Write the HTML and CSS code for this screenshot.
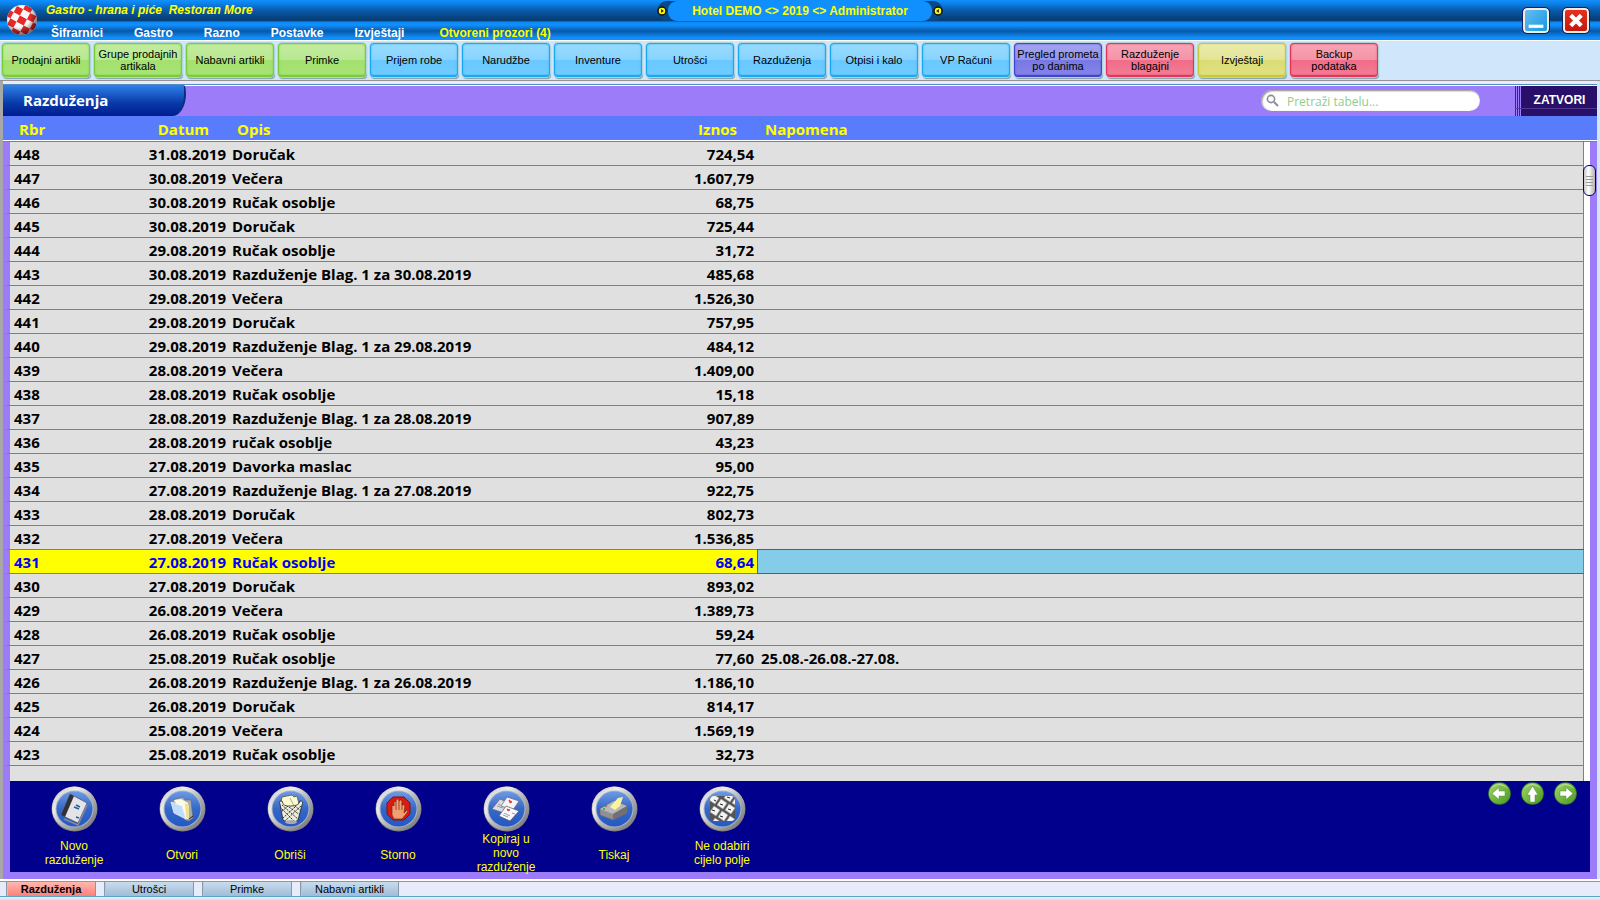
FILE: index.html
```
<!DOCTYPE html>
<html lang="hr">
<head>
<meta charset="utf-8">
<title>Gastro - hrana i piće</title>
<link rel="stylesheet" href="styles.css">
</head>
<body>
<svg class="defs" aria-hidden="true">
  <defs>
    <linearGradient id="rim" x1="0" y1="0" x2="1" y2="1"><stop offset="0" stop-color="#c4c4c4"/><stop offset=".3" stop-color="#ececec"/><stop offset=".55" stop-color="#b4b4b4"/><stop offset="1" stop-color="#6c6c6c"/></linearGradient>
    <linearGradient id="disc" x1="0" y1="0" x2="0" y2="1"><stop offset="0" stop-color="#6c9ae4"/><stop offset=".5" stop-color="#3468c8"/><stop offset="1" stop-color="#2458c4"/></linearGradient>
    <linearGradient id="green" x1="0" y1="0" x2="1" y2="1"><stop offset="0" stop-color="#a4d470"/><stop offset=".5" stop-color="#74b840"/><stop offset="1" stop-color="#4c9424"/></linearGradient>
    <radialGradient id="shade" cx=".4" cy=".35" r=".65"><stop offset=".6" stop-color="#000" stop-opacity="0"/><stop offset="1" stop-color="#200" stop-opacity=".6"/></radialGradient>
    <g id="badge"><ellipse cx="23.500" cy="23" rx="23" ry="22.500" fill="#7c7c7c"/><ellipse cx="23.500" cy="22.500" rx="22.500" ry="22" fill="url(#rim)"/><ellipse cx="23.500" cy="23" rx="19" ry="18.500" fill="#a8b4c8"/><ellipse cx="23.500" cy="23" rx="18" ry="17.500" fill="url(#disc)"/></g>
    <g id="orb"><circle cx="11.500" cy="11.500" r="11.300" fill="#3f8420"/><circle cx="11.500" cy="11.500" r="10.600" fill="url(#green)"/><path d="M3 7A10 10 0 0 1 20 7Q11-1 3 7" fill="#e4f4d0" opacity=".75"/></g>
  </defs>
</svg>
<div class="app">
  <header class="titlebar">
    <svg class="ball" viewBox="0 0 32 32" aria-hidden="true">
      <clipPath id="ballclip"><circle cx="16" cy="16" r="15"/></clipPath>
      <g clip-path="url(#ballclip)"><path fill="#f8f8f8" d="M0 0h32v32H0z"/><path transform="rotate(28 16 16)" fill="#e82828" d="M0 1h5v5H0zM12 1h8v5h-8zM27 1h5v5h-5zM5 6h7v7H5zM20 6h7v7h-7zM0 13h5v7H0zM12 13h8v7h-8zM27 13h5v7h-5zM5 20h7v7H5zM20 20h7v7h-7zM12 27h8v5h-8z"/></g>
      <circle cx="16" cy="16" r="15" fill="url(#shade)"/>
    </svg>
    <div class="titles">
      <h1>Gastro - hrana i piće&nbsp; Restoran More</h1>
      <nav class="menu">
        <a href="#">Šifrarnici</a><a href="#">Gastro</a><a href="#">Razno</a><a href="#">Postavke</a><a href="#">Izvještaji</a><a href="#" class="open">Otvoreni prozori (4)</a>
      </nav>
    </div>
    <div class="session">
      <svg viewBox="0 0 10 10" aria-hidden="true"><circle cx="5" cy="5" r="4" fill="#ff0" stroke="#111" stroke-width="1.500"/><path d="M4 3l3 2-3 2z" fill="#333"/></svg>
      <span>Hotel DEMO &lt;&gt; 2019 &lt;&gt; Administrator</span>
      <svg viewBox="0 0 10 10" aria-hidden="true"><circle cx="5" cy="5" r="4" fill="#ff0" stroke="#111" stroke-width="1.500"/><path d="M6 3L3 5l3 2z" fill="#333"/></svg>
    </div>
    <div class="winbtns">
      <button class="min" aria-label="Minimiziraj"><svg viewBox="0 0 20 20"><path d="M3 14h14v3H3z" fill="#fff"/></svg></button>
      <button class="cls" aria-label="Zatvori program"><svg viewBox="0 0 20 20"><path d="M5 5l10 10M15 5L5 15" stroke="#fff" stroke-width="4"/></svg></button>
    </div>
  </header>
  <nav class="toolbar">
    <button class="g">Prodajni artikli</button><button class="g">Grupe prodajnih artikala</button><button class="g">Nabavni artikli</button><button class="g">Primke</button><button class="b">Prijem robe</button><button class="b">Narudžbe</button><button class="b">Inventure</button><button class="b">Utrošci</button><button class="b">Razduženja</button><button class="b">Otpisi i kalo</button><button class="b">VP Računi</button><button class="v">Pregled prometa po danima</button><button class="r">Razduženje blagajni</button><button class="y">Izvještaji</button><button class="r">Backup<br>podataka</button>
  </nav>
  <main class="window">
    <div class="caption">
      <h2>Razduženja</h2>
      <label class="search">
        <svg viewBox="0 0 14 14" aria-hidden="true"><circle cx="5" cy="5" r="3.600" fill="none" stroke="#8c8c98" stroke-width="1.600"/><path d="M8 8l4 4" stroke="#8c8c98" stroke-width="2"/></svg>
        <input type="text" placeholder="Pretraži tabelu..." aria-label="Pretraži tabelu">
      </label>
      <button class="zatvori">ZATVORI</button>
    </div>
    <div class="grid">
      <table>
        <colgroup><col class="c1"><col class="c2"><col class="c3"><col class="c4"><col></colgroup>
        <thead><tr><th>Rbr</th><th>Datum</th><th>Opis</th><th>Iznos</th><th>Napomena</th></tr></thead>
        <tbody>
          <tr><td>448</td><td>31.08.2019</td><td>Doručak</td><td>724,54</td><td></td></tr>
          <tr><td>447</td><td>30.08.2019</td><td>Večera</td><td>1.607,79</td><td></td></tr>
          <tr><td>446</td><td>30.08.2019</td><td>Ručak osoblje</td><td>68,75</td><td></td></tr>
          <tr><td>445</td><td>30.08.2019</td><td>Doručak</td><td>725,44</td><td></td></tr>
          <tr><td>444</td><td>29.08.2019</td><td>Ručak osoblje</td><td>31,72</td><td></td></tr>
          <tr><td>443</td><td>30.08.2019</td><td>Razduženje Blag. 1 za 30.08.2019</td><td>485,68</td><td></td></tr>
          <tr><td>442</td><td>29.08.2019</td><td>Večera</td><td>1.526,30</td><td></td></tr>
          <tr><td>441</td><td>29.08.2019</td><td>Doručak</td><td>757,95</td><td></td></tr>
          <tr><td>440</td><td>29.08.2019</td><td>Razduženje Blag. 1 za 29.08.2019</td><td>484,12</td><td></td></tr>
          <tr><td>439</td><td>28.08.2019</td><td>Večera</td><td>1.409,00</td><td></td></tr>
          <tr><td>438</td><td>28.08.2019</td><td>Ručak osoblje</td><td>15,18</td><td></td></tr>
          <tr><td>437</td><td>28.08.2019</td><td>Razduženje Blag. 1 za 28.08.2019</td><td>907,89</td><td></td></tr>
          <tr><td>436</td><td>28.08.2019</td><td>ručak osoblje</td><td>43,23</td><td></td></tr>
          <tr><td>435</td><td>27.08.2019</td><td>Davorka maslac</td><td>95,00</td><td></td></tr>
          <tr><td>434</td><td>27.08.2019</td><td>Razduženje Blag. 1 za 27.08.2019</td><td>922,75</td><td></td></tr>
          <tr><td>433</td><td>28.08.2019</td><td>Doručak</td><td>802,73</td><td></td></tr>
          <tr><td>432</td><td>27.08.2019</td><td>Večera</td><td>1.536,85</td><td></td></tr>
          <tr class="sel"><td>431</td><td>27.08.2019</td><td>Ručak osoblje</td><td>68,64</td><td></td></tr>
          <tr><td>430</td><td>27.08.2019</td><td>Doručak</td><td>893,02</td><td></td></tr>
          <tr><td>429</td><td>26.08.2019</td><td>Večera</td><td>1.389,73</td><td></td></tr>
          <tr><td>428</td><td>26.08.2019</td><td>Ručak osoblje</td><td>59,24</td><td></td></tr>
          <tr><td>427</td><td>25.08.2019</td><td>Ručak osoblje</td><td>77,60</td><td>25.08.-26.08.-27.08.</td></tr>
          <tr><td>426</td><td>26.08.2019</td><td>Razduženje Blag. 1 za 26.08.2019</td><td>1.186,10</td><td></td></tr>
          <tr><td>425</td><td>26.08.2019</td><td>Doručak</td><td>814,17</td><td></td></tr>
          <tr><td>424</td><td>25.08.2019</td><td>Večera</td><td>1.569,19</td><td></td></tr>
          <tr><td>423</td><td>25.08.2019</td><td>Ručak osoblje</td><td>32,73</td><td></td></tr>
        </tbody>
      </table>
      <div class="rest"></div>
      <div class="thumb"><i></i><i></i><i></i><i></i></div>
    </div>
    <div class="actions">
      <button><svg viewBox="0 0 47 46"><use href="#badge"/><path d="M19 8l17 9-9 20-17-8z" fill="#e4e4e8" stroke="#445" stroke-width=".6"/><path d="M19 8l4 2-9 21-4-2z" fill="#303038"/><path d="M13 33l14 6 9-20" fill="none" stroke="#889" stroke-width="1.500"/><path d="M25 19l4 2m-6 0l5 2m-3 8l3 1" stroke="#246098" stroke-width="1.600"/></svg><span>Novo razduženje</span></button>
      <button class="one"><svg viewBox="0 0 47 46"><use href="#badge"/><path d="M13 15l4-2 7-2 2 3 6 0 1 10 1 8-4 3-4-1z" fill="#a4acb4" stroke="#667" stroke-width=".6"/><path d="M15 14l7-1 7 4 0 16-4-1z" fill="#fffbe0"/><path d="M26 17l4 2v14l-3-2z" fill="#f0e08c"/><path d="M12 16l11 4 4 13-12-6z" fill="#c0dcfc" stroke="#e8f0fc" stroke-width=".8"/><path d="M30 33l4-3" stroke="#222"/></svg><span>Otvori</span></button>
      <button class="one"><svg viewBox="0 0 47 46"><use href="#badge"/><path d="M14 16l1-5 10-2 2 2 3-1 2 8-6 5H15z" fill="#fffbd0" stroke="#554" stroke-width=".8"/><path d="M23 12l5 10" stroke="#aa9"/><path d="M13 18q-2-3 2-3 1 6 9 5 8 0 9-5 4 0 2 4l-4 15q-7 6-15 0z" fill="#ececdc" stroke="#222" stroke-width=".8"/><path d="M13 21l14 14M15 19l17 15M22 21l11 8M28 20l6 5M34 20L18 35M28 21L16 32M21 20l-7 6" stroke="#333" stroke-width="1" stroke-dasharray="2 1"/><ellipse cx="24" cy="36" rx="6" ry="2" fill="#aaa"/></svg><span>Obriši</span></button>
      <button class="one"><svg viewBox="0 0 47 46"><use href="#badge"/><path d="M18 11h11l6 6v11l-6 6H18l-6-6V17z" fill="#d81c14" stroke="#8c0c0c"/><path d="M17 20q1-2 2 0v-4q1-2 2 0v-2q1-2 3 0v1q2-2 3 0v4q2-1 3 1l-1 7 3-3q2 0 0 3l-5 6h-8l-2-4z" fill="#f0a070" stroke="#802010" stroke-width=".7"/><path d="M21 16v8M24 15v9M27 17v7" stroke="#802010" stroke-width=".7"/></svg><span>Storno</span></button>
      <button><svg viewBox="0 0 47 46"><use href="#badge"/><path d="M17 13l11 5-7 9-12-4z" fill="#dcdce0" stroke="#667" stroke-width=".7"/><path d="M24 11l12 4-6 9-12-4z" fill="#f4f4f8" stroke="#667" stroke-width=".7"/><path d="M23 20l13 5-9 10-11-5z" fill="#f8f8fc" stroke="#556" stroke-width=".7"/><path d="M26 14l3 2-2 1zM24 23l3 1-2 1z" fill="#e84040" stroke="#e84040"/><path d="M14 20l6 2M15 18l4 2M21 27l6 3M20 29l5 2M29 27l3 1" stroke="#99a"/></svg><span>Kopiraj u novo razduženje</span></button>
      <button class="one"><svg viewBox="0 0 47 46"><use href="#badge"/><path d="M9 23l14-8 13 5v7L22 34 9 29z" fill="#909094" stroke="#667" stroke-width=".7"/><path d="M9 23l14-8 13 5-14 8z" fill="#b8b8bc"/><path d="M22 28v6l14-7v-7z" fill="#707074"/><path d="M19 21l8-9 5-1-3 9-5 4z" fill="#f8f4a0"/><path d="M12 23h2" stroke="#30c040" stroke-width="2"/><path d="M14 20h2" stroke="#d04030" stroke-width="1.500"/></svg><span>Tiskaj</span></button>
      <button><svg viewBox="0 0 47 46"><use href="#badge"/><clipPath id="keys"><rect x="11" y="10" width="25" height="25" rx="4"/></clipPath><g clip-path="url(#keys)"><path fill="#555" d="M11 10h25v25H11z"/><g fill="#f4f4f4" stroke="#999" stroke-width=".6"><path id="key" d="M22 13l6 4-4 6-6-4z"/><use href="#key" x="8" y="5"/><use href="#key" x="-8" y="-5"/><use href="#key" x="-7" y="7"/><use href="#key" x="1" y="12"/><use href="#key" x="7" y="-7"/><use href="#key" x="9" y="17"/><use href="#key" x="15" y="-2"/><use href="#key" x="-6" y="19"/></g><path d="M21 18l3 1m5 4l3 1m-19 0l3 1m5 5l3 1m4-20l3 1m-16 2l2 1" stroke="#222"/></g></svg><span>Ne odabiri cijelo polje</span></button>
      <div class="nav">
        <button aria-label="Prethodni"><svg viewBox="0 0 23 23"><use href="#orb"/><path d="M4 11.500l7-6v3.500h6v5h-6v3.500z" fill="#fff" stroke="#4c8c30" stroke-width=".5"/></svg></button>
        <button aria-label="Gore"><svg viewBox="0 0 23 23"><use href="#orb"/><path d="M11.500 4l5.500 9h-3v7H9v-7H6z" fill="#fff" stroke="#4c8c30" stroke-width=".5"/></svg></button>
        <button aria-label="Sljedeći"><svg viewBox="0 0 23 23"><use href="#orb"/><path d="M19 11.500l-7-6v3.500H6v5h6v3.500z" fill="#fff" stroke="#4c8c30" stroke-width=".5"/></svg></button>
      </div>
    </div>
  </main>
  <footer class="tabs">
    <button class="active">Razduženja</button><button>Utrošci</button><button>Primke</button><button>Nabavni artikli</button>
  </footer>
</div>
</body>
</html>
```

FILE: styles.css
```
* { box-sizing: border-box; }
body { margin: 0; font-family: "Liberation Sans", Arial, sans-serif; font-size: 12px; background: #d0e6fa; }
button { font: inherit; border: 0; padding: 0; margin: 0; background: none; cursor: pointer; }
h1, h2 { margin: 0; }
.defs { position: absolute; width: 0; height: 0; }
.app { min-height: 100vh; display: flex; flex-direction: column; }

.titlebar { position: relative; display: flex; height: 41px; padding-left: 6px; border-bottom: 1px solid #fff;
  background: linear-gradient(#1090ff 0, #0c84ec 3px, #0858a8 11px, #083c70 20px, #084888 21px, #0c88f4 22px, #1090ff 25px, #0858a8 31px, #1090ff 38px, #1090ff 40px); }
.ball { width: 32px; height: 32px; margin-top: 4px; }
.titles { padding-left: 8px; }
h1 { font-size: 12px; line-height: 20px; height: 24px; font-style: italic; color: #ff0; white-space: nowrap; }
.menu { display: flex; gap: 31px; padding-left: 5px; line-height: 18px; font-weight: bold; white-space: nowrap; }
.menu a { color: #fff; text-decoration: none; }
.menu .open { color: #ff0; padding-left: 4px; }
.session { position: absolute; top: 1px; left: 50%; margin-left: -143px; width: 286px; height: 20px; display: flex; align-items: center; justify-content: space-between; background: #084888; border-radius: 10px; color: #ff0; font-weight: bold; }
.session span { flex: 1; margin: 0 1px; line-height: 20px; text-align: center; background: #1090ff; border-radius: 9px; }
.session svg { width: 10px; height: 10px; }
.winbtns { margin-left: auto; padding: 8px 11px 0 0; display: flex; gap: 14px; }
.winbtns button { width: 26px; height: 25px; border: 2px solid #f4ecdc; border-radius: 4px; outline: 1px solid #0c1c70; }
.winbtns svg { display: block; width: 22px; height: 21px; }
.min { background: linear-gradient(135deg, #68bcf4, #1498e0); }
.cls { background: linear-gradient(#e83020, #c01810); }

.toolbar { display: flex; gap: 4px; height: 40px; padding: 2px 2px 2px; border-bottom: 1px solid #989098; background: #d0e6fa; }
.toolbar button { width: 88px; height: 34px; border: 1px solid; border-bottom-width: 2px; border-radius: 4px; font-size: 11px; line-height: 12px; color: #000; box-shadow: 0 0 0 1px #b0d4e0, 1px 2px 1px #80a0a8, inset 0 0 2px var(--s); }
.toolbar .g { background: linear-gradient(#c4eca0, #b8e890 50%, #a4e070 52%, #a8e474); border-color: #78cc38; --s: #78cc38; }
.toolbar .b { background: linear-gradient(#98dcff, #88d4ff 50%, #68c8ff 52%, #70ccff); border-color: #18a8f4; --s: #30b4f8; }
.toolbar .v { background: linear-gradient(#a4a4f0, #9494ec 50%, #7878e4 52%, #8484e8); border-color: #4444cc; --s: #5050d0; }
.toolbar .r { background: linear-gradient(#f8a4b4, #f494a8 50%, #f06c88 52%, #f47c94); border-color: #e43458; --s: #e84868; }
.toolbar .y { background: linear-gradient(#ececac, #e4e498 50%, #dcdc74 52%, #e0e080); border-color: #c8c838; --s: #d0d050; }

.window { flex: 1; margin-right: 3px; border-left: 3px solid #a8a8a8; padding: 3px 0 7px; display: flex; flex-direction: column; background: linear-gradient(#e8ecfa 3px, #9c7cf8 3px); }
.caption { display: flex; align-items: stretch; height: 32px; border-top: 1px solid #5090c0; box-shadow: inset 0 1px #fff; }
.caption h2 { width: 183px; padding-left: 20px; font: bold 15px/31px "Open Sans", "Noto Sans", sans-serif; color: #fff; background: linear-gradient(#3080e8, #0838a8 60%, #001c90); border-radius: 0 3px 18px 0 / 0 12px 30px 0; border-right: 2px solid #083078; }
.search { display: flex; align-items: center; gap: 7px; margin: 5px 35px 5px auto; padding-left: 5px; width: 219px; height: 21px; border-radius: 11px; background: #fff; box-shadow: inset 1px 1px 2px #888; }
.search svg { width: 14px; height: 14px; }
.search input { width: 170px; min-width: 0; padding: 2px 0 0; border: 0; outline: 0; background: none; font: 12px/18px "Open Sans", "Noto Sans", sans-serif; }
.search input::placeholder { color: #90cc90; opacity: 1; }
.zatvori { width: 82px; margin-top: 1px; padding: 0 0 3px 7px; color: #fff; font-weight: bold; background: linear-gradient(transparent 22px, #503890 22px, #503890 23px, transparent 23px), linear-gradient(90deg, #402080 1px, #9c7cf8 1px, #9c7cf8 2px, #402080 2px, #402080 3px, #9c7cf8 3px, #9c7cf8 4px, #402080 4px, #402080 5px, #9c7cf8 5px, #9c7cf8 6px, #281068 6px); }

.grid { position: relative; display: flex; flex-direction: column; flex: 1; padding-right: 13px; background: linear-gradient(#587cfc 24px, #fff 24px, #fff 25px, #587cfc 25px, #587cfc 26px, transparent 26px), linear-gradient(90deg, transparent calc(100% - 13px), #fff calc(100% - 13px), #fff calc(100% - 7px), #9c7cf8 calc(100% - 7px)); }
table { width: 100%; border-collapse: separate; border-spacing: 0; table-layout: fixed; font: bold 15px/22px "Open Sans", "Noto Sans", sans-serif; }
.c1 { width: 96px; }
.c2 { width: 130px; }
.c3 { width: 424px; }
.c4 { width: 104px; }
th { height: 26px; padding: 0 8px; text-align: left; color: #ff0; background: #587cfc; border-bottom: 1px solid #587cfc; box-shadow: inset 0 -1px #fff; }
th:first-child { padding-left: 16px; }
th:nth-child(2), th:nth-child(4) { text-align: right; padding-right: 20px; }
tbody td { height: 24px; padding: 0 3px; white-space: nowrap; background: #e0e0e0; border-bottom: 1px solid #587cfc; color: #000; }
tbody td:first-child { padding-left: 4px; border-left: 7px solid #9c7cf8; }
td:nth-child(2), td:nth-child(4) { text-align: right; }
tbody td:last-child { padding-left: 4px; border-right: 1px solid #587cfc; }
tbody .sel td { background: #ff0; color: #00f; }
tbody .sel td:last-child { background: #84cce8; border-bottom-color: #506070; box-shadow: inset 1px 0 #506070, 0 -1px #506070; }
.rest { flex: 1; margin-left: 7px; background: #e0e0e0; border-right: 1px solid #587cfc; }
.thumb { position: absolute; top: 49px; right: 1px; width: 13px; height: 31px; padding: 10px 2px 0; display: flex; flex-direction: column; gap: 2px; border: 1px solid #000070; border-radius: 6px; background: linear-gradient(90deg, #c8c8c8, #fff 40%, #b0b0b0); }
.thumb i { height: 1px; background: #999; }

.actions { display: flex; height: 91px; margin: 0 7px; padding-left: 10px; background: #00008c; }
.actions > button { width: 108px; height: 91px; padding-top: 5px; display: flex; flex-direction: column; align-items: center; color: #ff0; line-height: 14px; }
.actions > button svg { flex: none; width: 47px; height: 46px; }
.actions span { width: 72px; height: 42px; flex: none; display: flex; align-items: center; justify-content: center; text-align: center; }
.actions .one span { padding-top: 4px; }
.nav { margin-left: auto; padding: 1px 13px 0 0; display: flex; gap: 10px; align-items: flex-start; }
.nav svg { display: block; width: 23px; height: 23px; }

.tabs { display: flex; gap: 8px; height: 21px; padding: 3px 6px 4px; background: linear-gradient(#fff 2px, #909890 2px, #909890 3px, #e8ecfa 3px, #e8ecfa 17px, #60a0c0 17px, #60a0c0 18px, #e8f4fc 18px, #d0e6fa 20px); }
.tabs button { width: 90px; font-size: 11px; line-height: 14px; border: solid #8898a8; border-width: 0 1px; background: linear-gradient(#c8dcec, #a0bcd8); box-shadow: inset 1px 0 #b8c8d8; }
.tabs button:last-child { width: 99px; }
.tabs .active { font-weight: bold; background: linear-gradient(#ffb8b0, #ff8078); }
```
